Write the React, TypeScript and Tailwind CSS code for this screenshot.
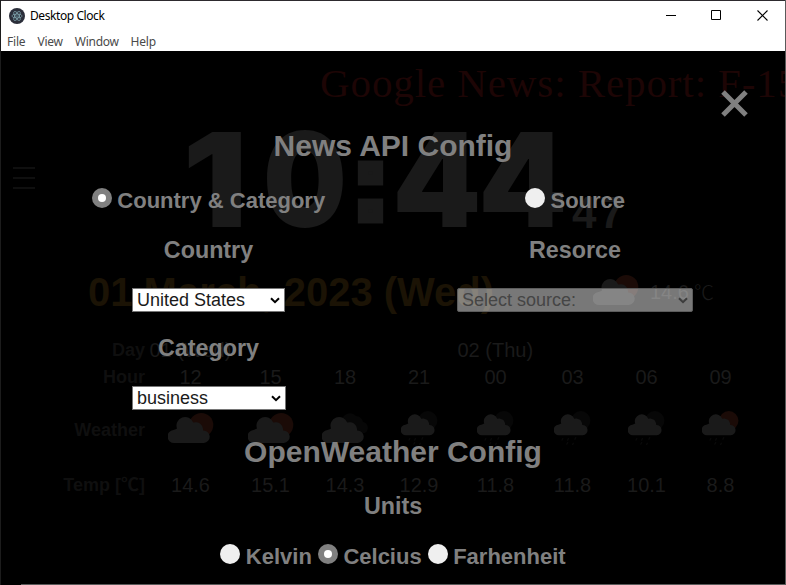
import React from "react";

const SANS = "font-['Liberation_Sans','Noto_Sans_CJK_JP',sans-serif]";

type Sky = "sun" | "cloud" | "moonRain" | "sunRain";

const CLOUD =
  "M6.5 26 A6.5 6.5 0 0 1 5.5 13 Q8 12 9 11.5 A8.6 8.6 0 0 1 25.2 5.6 A7.5 7.5 0 0 1 35 13.4 A6.3 6.3 0 0 1 35.8 26 Z";

function CloudIcon({ kind, className }: { kind: Sky; className?: string }) {
  const rain = kind === "moonRain" || kind === "sunRain";
  const warm = kind === "sun" || kind === "sunRain";
  return (
    <svg viewBox="0 0 46 42" className={className} fill="none">
      {kind === "cloud" ? (
        <path
          d="M20 8 A8 8 0 0 1 34 3 A7 7 0 0 1 41 9 A6 6 0 0 1 43 20 L30 20 Z"
          fill="#070707"
        />
      ) : (
        <circle cx="33.3" cy="12" r="12" fill={warm ? "#1b0b07" : "#070707"} />
      )}
      <g transform="translate(0 4)">
        <path d={CLOUD} fill="#1a1a1a" />
      </g>
      {rain && (
        <g stroke="#0a0a0a" strokeWidth="1.6" strokeLinecap="round">
          <path d="M11 34l-1 2M18 34l-1 2M27 33l-1 2M17 39l-1 2M24 40l-1 2" />
        </g>
      )}
    </svg>
  );
}

const forecast: { hour: string; temp: string; sky: Sky; width: string }[] = [
  { hour: "12", temp: "14.6", sky: "sun", width: "w-[82px]" },
  { hour: "15", temp: "15.1", sky: "sun", width: "w-[78px]" },
  { hour: "18", temp: "14.3", sky: "cloud", width: "w-[71px]" },
  { hour: "21", temp: "12.9", sky: "moonRain", width: "w-[77px]" },
  { hour: "00", temp: "11.8", sky: "moonRain", width: "w-[76px]" },
  { hour: "03", temp: "11.8", sky: "moonRain", width: "w-[78px]" },
  { hour: "06", temp: "10.1", sky: "moonRain", width: "w-[70px]" },
  { hour: "09", temp: "8.8", sky: "sunRain", width: "w-[78px]" },
];

function TitleBar() {
  return (
    <header className="h-[51px] border-t border-[#2d2a2e] bg-white font-['Noto_Sans',sans-serif] text-[12px] text-black">
      <div className="flex h-[29px] items-center pl-2">
        <svg viewBox="0 0 16 16" className="mr-[5px] h-4 w-4" fill="none">
          <circle cx="8" cy="8" r="8" fill="#2b2e3a" />
          <g stroke="#8fb9c1" strokeWidth="0.6">
            <ellipse cx="8" cy="8" rx="5.2" ry="2" />
            <ellipse cx="8" cy="8" rx="5.2" ry="2" transform="rotate(60 8 8)" />
            <ellipse cx="8" cy="8" rx="5.2" ry="2" transform="rotate(120 8 8)" />
          </g>
          <circle cx="8" cy="8" r="0.6" fill="#9feaf9" />
        </svg>
        <span className="tracking-[-0.42px]">Desktop Clock</span>
        <div className="ml-auto flex items-center gap-[35px] pr-[17px]">
          <svg width="11" height="11" viewBox="0 0 11 11" shapeRendering="crispEdges">
            <path d="M1 5.5h10" stroke="#000" />
          </svg>
          <svg width="11" height="11" viewBox="0 0 11 11" fill="none">
            <path d="M.5.5h9v9h-9z" stroke="#000" />
          </svg>
          <svg width="11" height="11" viewBox="0 0 11 11">
            <path d="M.5.5l10 10M10.5.5l-10 10" stroke="#000" strokeWidth="1.1" />
          </svg>
        </div>
      </div>
      <nav className="flex h-[21px] items-center gap-3 pl-[6px] pt-[2px] tracking-[-0.2px] text-[#4a4a4a]">
        <span>File</span>
        <span>View</span>
        <span className="tracking-[-0.3px]">Window</span>
        <span>Help</span>
      </nav>
    </header>
  );
}

function ClockFace() {
  return (
    <div className={`flex h-full w-full flex-col ${SANS} text-[20px] leading-none text-[#1a1a1a]`}>
      <div className="h-[64px] overflow-hidden whitespace-nowrap pl-[319px] pt-[8px] font-['Liberation_Serif',serif] text-[41px] leading-[48px] tracking-[0.9px] text-[#1d0505]">
        Google News: Report: F-15
      </div>
      <div className="flex h-[150px] pl-3">
        <div className="flex w-[167px] flex-col gap-2 pt-[52px]">
          <div className="h-[2px] w-[22px] bg-[#0f0f0f]" />
          <div className="h-[2px] w-[22px] bg-[#0f0f0f]" />
          <div className="h-[2px] w-[22px] bg-[#0f0f0f]" />
        </div>
        <div className="flex pt-[2px] font-['Inter',sans-serif] text-[131px] font-black leading-[126px]">
          <span className="w-[70px] origin-center scale-x-110 text-center">1</span>
          <span className="ml-[13px] w-[87px] origin-left scale-x-90 text-center">0</span>
          <span className="w-[41px] pt-[3px] text-center font-['Liberation_Sans',sans-serif] text-[102px] font-bold leading-[126px] [-webkit-text-stroke:11px_#1a1a1a]">
            :
          </span>
          <span className="w-[86px] origin-center scale-x-[0.97] text-center">4</span>
          <span className="w-[88px] origin-center scale-x-[0.97] text-center">4</span>
          <span className="flex gap-[3px] pl-[7px] pt-[33px] font-['Liberation_Sans',sans-serif] text-[44px]">
            <span>4</span>
            <span>7</span>
          </span>
        </div>
      </div>
      <div className="flex h-[54px] items-center pl-[87px]">
        <span className="w-[505px] text-[40px] font-bold text-[#1b1305]">01 March, 2023 (Wed)</span>
        <CloudIcon kind="sun" className="mt-[8px] h-[42px] w-[46px]" />
        <span className="ml-[11px] flex gap-[5px]">
          14.6
          <span className="font-['Noto_Sans_CJK_JP',sans-serif] font-light">℃</span>
        </span>
      </div>
      <div className="flex pt-[20px]">
        <div className="flex w-[144px] flex-col text-right text-[18px] font-bold text-[#0f0f0f]">
          <span className="h-[27px] leading-[22px]">Day</span>
          <span className="h-[27px] leading-[22px]">Hour</span>
          <span className="h-[54px] leading-[74px]">Weather</span>
          <span className="leading-[76px]">Temp [℃]</span>
        </div>
        <div className="flex flex-col pl-[4.5px]">
          <div className="flex h-[27px] leading-[22px]">
            <span className="w-[308px]">01 (Wed)</span>
            <span>02 (Thu)</span>
          </div>
          <div className="flex">
            {forecast.map((f) => (
              <div key={f.hour} className={`flex flex-col items-center ${f.width}`}>
                <span className="h-[27px] leading-[22px]">{f.hour}</span>
                <div className="flex h-[54px] items-center justify-center pt-[11px]">
                  <CloudIcon
                    kind={f.sky}
                    className={
                      f.sky === "sun" || f.sky === "cloud"
                        ? "mt-[16px] h-[42px] w-[46px]"
                        : "mt-[4px] h-[34px] w-[37px]"
                    }
                  />
                </div>
                <span className="leading-[76px]">{f.temp}</span>
              </div>
            ))}
          </div>
        </div>
      </div>
    </div>
  );
}

function Radio({ label, checked }: { label: string; checked?: boolean }) {
  return (
    <label className="flex h-[26px] items-start text-[22px] font-bold leading-[26px]">
      <span
        className={`mr-[5.5px] flex h-5 w-5 shrink-0 items-center justify-center rounded-full ${
          checked ? "bg-[#808080]" : "bg-[#efefef]"
        }`}
      >
        {checked && <span className="h-2 w-2 rounded-full bg-white" />}
      </span>
      {label}
    </label>
  );
}

function Select({ value, disabled, className }: { value: string; disabled?: boolean; className: string }) {
  return (
    <div
      className={`flex h-6 items-center justify-between border pl-[4px] pr-1 text-[18px] leading-none ${
        disabled
          ? "rounded-[2px] border-[#5c5c5c] bg-white/47 text-[#454545]"
          : "border-[#767676] bg-white text-[#1a1a1a]"
      } ${className}`}
    >
      {value}
      <svg width="10" height="7" viewBox="0 0 10 7" fill="none" className={disabled ? "text-[#3c3c3c]" : "text-black"}>
        <path d="M1 1.2l4 4 4-4" stroke="currentColor" strokeWidth="2" />
      </svg>
    </div>
  );
}

function ConfigPanel() {
  return (
    <section className={`absolute inset-0 flex flex-col ${SANS} text-[#808080]`}>
      <div className="flex h-[78px] items-start justify-end pr-[37px] pt-[39px]">
        <svg width="27" height="27" viewBox="0 0 27 27">
          <path d="M2 2l23 23M25 2L2 25" stroke="#808080" strokeWidth="5" />
        </svg>
      </div>
      <h2 className="text-center text-[30px] font-bold leading-[34px]">News API Config</h2>
      <div className="flex pt-[25px]">
        <div className="flex w-[415px] flex-col items-center">
          <Radio label="Country & Category" checked />
          <h3 className="pt-[23px] text-[23.3px] font-bold leading-[27px]">Country</h3>
          <Select value="United States" className="mt-[24px] w-[153px]" />
          <h3 className="pt-[23px] text-[23.3px] font-bold leading-[27px]">Category</h3>
          <Select value="business" className="mt-[24px] ml-px w-[154px]" />
        </div>
        <div className="flex w-[318px] flex-col items-center">
          <Radio label="Source" />
          <h3 className="pt-[23px] text-[23.3px] font-bold leading-[27px]">Resorce</h3>
          <Select value="Select source:" disabled className="mt-[24px] w-[236px]" />
        </div>
      </div>
      <h2 className="pt-[25px] text-center text-[30px] font-bold leading-[34px]">OpenWeather Config</h2>
      <h3 className="pt-[24px] text-center text-[23.3px] font-bold leading-[27px]">Units</h3>
      <div className="flex justify-center gap-[6px] pt-[24px]">
        <Radio label="Kelvin" />
        <Radio label="Celcius" checked />
        <Radio label="Farhenheit" />
      </div>
    </section>
  );
}

export default function App() {
  return (
    <div className="flex h-[585px] w-[786px] flex-col overflow-hidden border-x border-l-[#1c1c1c] border-r-[#5a5a5a] bg-black">
      <TitleBar />
      <main className="relative h-[533px] shrink-0">
        <ClockFace />
        <ConfigPanel />
      </main>
      <div className="ml-5 h-px bg-[#5a5a5a]" />
    </div>
  );
}
